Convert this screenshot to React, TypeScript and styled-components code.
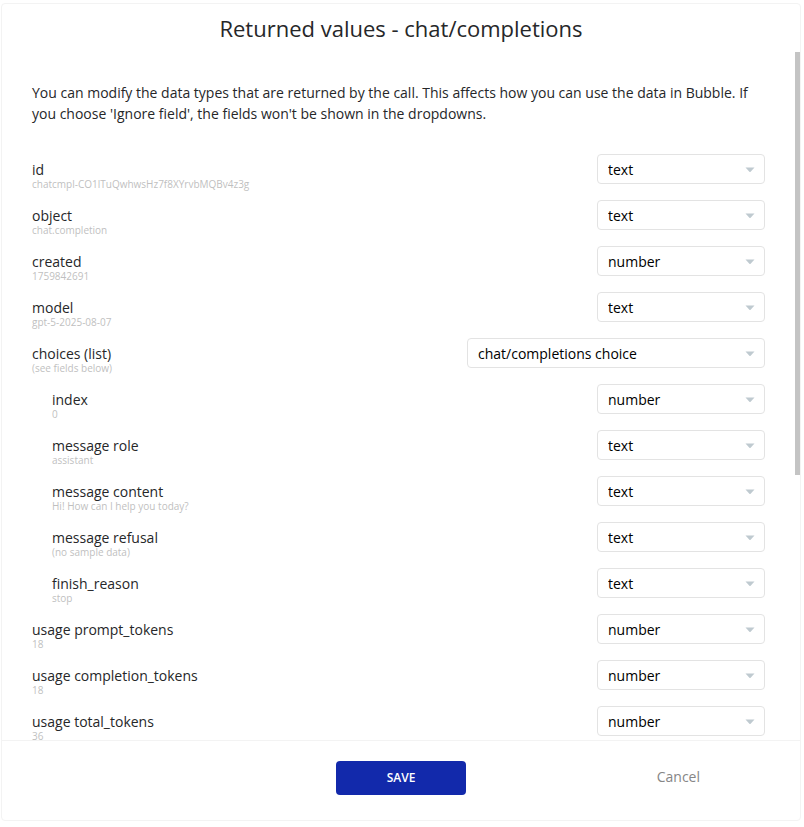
import React, { useEffect, useRef, useState } from "react";
import styled, { createGlobalStyle } from "styled-components";

const GlobalStyle = createGlobalStyle`
  *, *::before, *::after { box-sizing: border-box; }
  body {
    margin: 0;
    background: #ffffff;
    color: #262729;
    font-family: "Open Sans", "Noto Sans", sans-serif;
    font-size: 14px;
  }
`;

const Page = styled.main`
  height: 100vh;
  padding: 3px 3px 6px 1px;
`;

const Dialog = styled.section`
  display: flex;
  flex-direction: column;
  height: 100%;
  border: 1px solid #f3f3f3;
  border-radius: 4px;
  background: #ffffff;
`;

const Title = styled.h1`
  margin: 0;
  padding: 9px 20px;
  font-size: 22px;
  font-weight: 400;
  line-height: 30px;
  text-align: center;
`;

const Viewport = styled.div`
  display: flex;
  flex: 1;
  min-height: 0;
`;

const Content = styled.div`
  flex: 1;
  min-width: 0;
  padding: 30px 30px 436px;
  overflow-y: auto;
  scrollbar-width: none;
`;

const Rail = styled.div`
  flex: none;
  width: 5px;
`;

const Thumb = styled.div`
  background: #c4c4c4;
`;

const Intro = styled.p`
  margin: 0 0 30px;
  line-height: 21px;
`;

const FieldList = styled.div`
  display: flex;
  flex-direction: column;
  gap: 16px;
`;

const FieldRow = styled.div<{ $nested?: boolean }>`
  display: flex;
  align-items: flex-start;
  justify-content: space-between;
  height: 30px;
  padding-left: ${(p) => (p.$nested ? "20px" : "0")};
`;

const FieldText = styled.div`
  display: flex;
  flex-direction: column;
  padding-top: 7px;
`;

const FieldName = styled.label`
  line-height: 18px;
`;

const Sample = styled.span`
  color: #bfbfbf;
  font-size: 10px;
  line-height: 10px;
`;

const SelectBox = styled.div<{ $wide?: boolean }>`
  display: grid;
  align-items: center;
  flex: none;
  width: ${(p) => (p.$wide ? "298px" : "168px")};
`;

const Select = styled.select`
  grid-area: 1 / 1;
  width: 100%;
  height: 30px;
  padding: 0 30px 0 10px;
  appearance: none;
  border: 1px solid #e3e3e3;
  border-radius: 4px;
  background: #ffffff;
  color: #000000;
  font: inherit;
`;

const Arrow = styled.svg`
  grid-area: 1 / 1;
  justify-self: end;
  width: 10px;
  height: 5px;
  margin: 1px 10px 0 0;
  fill: #bfcad0;
  pointer-events: none;
`;

const Footer = styled.footer`
  display: grid;
  grid-template-columns: 1fr 130px 1fr;
  align-items: center;
  height: 80px;
  padding-bottom: 6px;
  border-top: 1px solid #f3f3f3;
`;

const SaveButton = styled.button`
  grid-column: 2;
  height: 34px;
  border: 0;
  border-radius: 4px;
  background: #1229ab;
  color: #ffffff;
  font: 600 12px "Open Sans", "Noto Sans", sans-serif;
  cursor: pointer;
`;

const CancelButton = styled.button`
  justify-self: end;
  margin-right: 90px;
  padding: 4px 10px 6px;
  border: 0;
  background: transparent;
  color: #868686;
  font: inherit;
  cursor: pointer;
`;

type Field = { name: string; sample: string; type: string; nested?: boolean };

const fields: Field[] = [
  { name: "id", sample: "chatcmpl-CO1lTuQwhwsHz7f8XYrvbMQBv4z3g", type: "text" },
  { name: "object", sample: "chat.completion", type: "text" },
  { name: "created", sample: "1759842691", type: "number" },
  { name: "model", sample: "gpt-5-2025-08-07", type: "text" },
  { name: "choices (list)", sample: "(see fields below)", type: "chat/completions choice" },
  { name: "index", sample: "0", type: "number", nested: true },
  { name: "message role", sample: "assistant", type: "text", nested: true },
  { name: "message content", sample: "Hi! How can I help you today?", type: "text", nested: true },
  { name: "message refusal", sample: "(no sample data)", type: "text", nested: true },
  { name: "finish_reason", sample: "stop", type: "text", nested: true },
  { name: "usage prompt_tokens", sample: "18", type: "number" },
  { name: "usage completion_tokens", sample: "18", type: "number" },
  { name: "usage total_tokens", sample: "36", type: "number" },
];

function FieldItem({ field }: { field: Field }) {
  const id = "type-" + field.name.replace(/[^a-z]+/g, "-");
  return (
    <FieldRow $nested={field.nested}>
      <FieldText>
        <FieldName htmlFor={id}>{field.name}</FieldName>
        <Sample>{field.sample}</Sample>
      </FieldText>
      <SelectBox $wide={field.type.includes("/")}>
        <Select id={id} defaultValue={field.type}>
          <option>{field.type}</option>
        </Select>
        <Arrow viewBox="0 0 10 5" aria-hidden="true">
          <path d="M0.5 0.5h9L5.6 4.7q-.6.5-1.2 0z" />
        </Arrow>
      </SelectBox>
    </FieldRow>
  );
}

export default function App() {
  const content = useRef<HTMLDivElement>(null);
  const [thumb, setThumb] = useState({ size: 0, offset: 0 });

  const measure = () => {
    const el = content.current;
    if (!el) return;
    const ratio = el.clientHeight / el.scrollHeight;
    setThumb({
      size: Math.round(el.clientHeight * ratio),
      offset: Math.round(el.scrollTop * ratio),
    });
  };

  useEffect(() => {
    measure();
    window.addEventListener("resize", measure);
    return () => window.removeEventListener("resize", measure);
  }, []);

  return (
    <Page>
      <GlobalStyle />
      <Dialog role="dialog" aria-labelledby="dialog-title">
        <Title id="dialog-title">Returned values - chat/completions</Title>
        <Viewport>
          <Content ref={content} onScroll={measure}>
            <Intro>
              You can modify the data types that are returned by the call. This affects how you can
              use the data in Bubble. If you choose 'Ignore field', the fields won't be shown in the
              dropdowns.
            </Intro>
            <FieldList>
              {fields.map((field) => (
                <FieldItem key={field.name} field={field} />
              ))}
            </FieldList>
          </Content>
          <Rail>
            <Thumb style={{ height: thumb.size, marginTop: thumb.offset }} />
          </Rail>
        </Viewport>
        <Footer>
          <SaveButton type="button">SAVE</SaveButton>
          <CancelButton type="button">Cancel</CancelButton>
        </Footer>
      </Dialog>
    </Page>
  );
}
